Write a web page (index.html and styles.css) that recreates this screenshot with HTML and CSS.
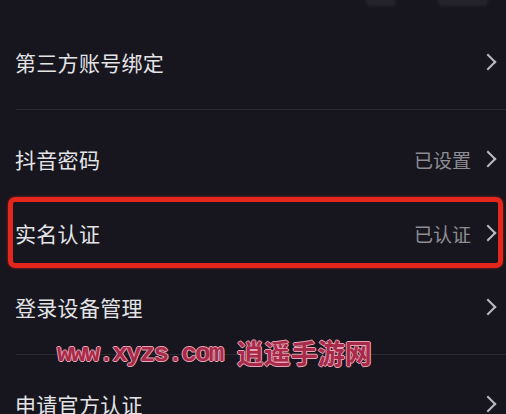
FILE: index.html
```html
<!DOCTYPE html>
<html lang="zh-CN">
<head>
    <meta charset="UTF-8">
    <meta name="viewport" content="width=device-width, initial-scale=1.0">
    <title>账号与安全</title>
    <link rel="stylesheet" href="styles.css">
</head>
<body>

    <div class="screen">
        <!-- bottom edge of the top bar buttons -->
        <div class="top-bar">
            <span class="top-btn small"></span>
            <span class="top-btn wide"></span>
        </div>

        <div class="row">
            <span class="label">第三方账号绑定</span>
            <span class="chevron"></span>
        </div>

        <div class="divider"></div>

        <div class="row">
            <span class="label">抖音密码</span>
            <span class="value">已设置</span>
            <span class="chevron"></span>
        </div>

        <div class="row marked">
            <span class="label">实名认证</span>
            <span class="value">已认证</span>
            <span class="chevron"></span>
        </div>

        <div class="row">
            <span class="label">登录设备管理</span>
            <span class="chevron"></span>
        </div>

        <div class="divider"></div>

        <div class="row">
            <span class="label">申请官方认证</span>
            <span class="chevron"></span>
        </div>

        <div class="watermark">
            <span class="wm-url">www.xyzs.com</span>
            <span class="wm-name">逍遥手游网</span>
        </div>
    </div>

</body>
</html>
```

FILE: styles.css
```css
body {
    margin: 0;
    background-color: #17161e;
    font-family: "Noto Sans CJK SC", "Noto Sans", sans-serif;
    overflow: hidden;
}

.screen {
    position: relative;
    width: 506px;
    height: 414px;
    display: flex;
    flex-direction: column;
}

.top-bar {
    height: 25px;
    flex: none;
    position: relative;
}

.top-btn {
    position: absolute;
    top: -6px;
    height: 12px;
    background-color: #24232c;
    border-radius: 4px;
    filter: blur(1.5px);
}

.top-btn.small {
    left: 366px;
    width: 30px;
}

.top-btn.wide {
    left: 438px;
    width: 50px;
}

.row {
    height: 74px;
    flex: none;
    display: flex;
    align-items: center;
    padding: 0 8px 0 15px;
    position: relative;
}

.label {
    flex: 1;
    font-size: 21px;
    color: #e4e4e7;
    letter-spacing: 0.3px;
}

.value {
    font-size: 19px;
    color: #8d8d93;
    margin-right: 11px;
}

.chevron {
    width: 10px;
    height: 10px;
    border-top: 2.5px solid #b9b9be;
    border-right: 2.5px solid #b9b9be;
    transform: rotate(45deg);
    margin-right: 4px;
}

/* red highlight frame around the real-name row */
.row.marked::after {
    content: "";
    position: absolute;
    left: 8px;
    right: 3px;
    top: 1px;
    bottom: 2px;
    border: 5px solid #e5261c;
    border-radius: 7px;
    box-shadow: 0 0 3px rgba(229, 38, 28, 0.6);
}

.divider {
    height: 1px;
    flex: none;
    margin: 10px 0 12px 16px;
    background-color: #2b2a33;
}

.watermark {
    position: absolute;
    left: 57px;
    top: 333px;
    display: flex;
    align-items: center;
    gap: 14px;
}

.wm-url {
    font-family: "Liberation Mono", monospace;
    font-weight: bold;
    font-size: 26px;
    letter-spacing: -1.8px;
    color: #a82a4a;
    text-shadow: 1px 0 #e7a3b3, -1px 0 #e7a3b3, 0 1px #e7a3b3, 0 -1px #e7a3b3;
    margin-top: 2px;
}

.wm-name {
    font-size: 27px;
    font-weight: bold;
    color: #a82a4a;
    text-shadow: 1px 0 #e7a3b3, -1px 0 #e7a3b3, 0 1px #e7a3b3, 0 -1px #e7a3b3;
}
```
